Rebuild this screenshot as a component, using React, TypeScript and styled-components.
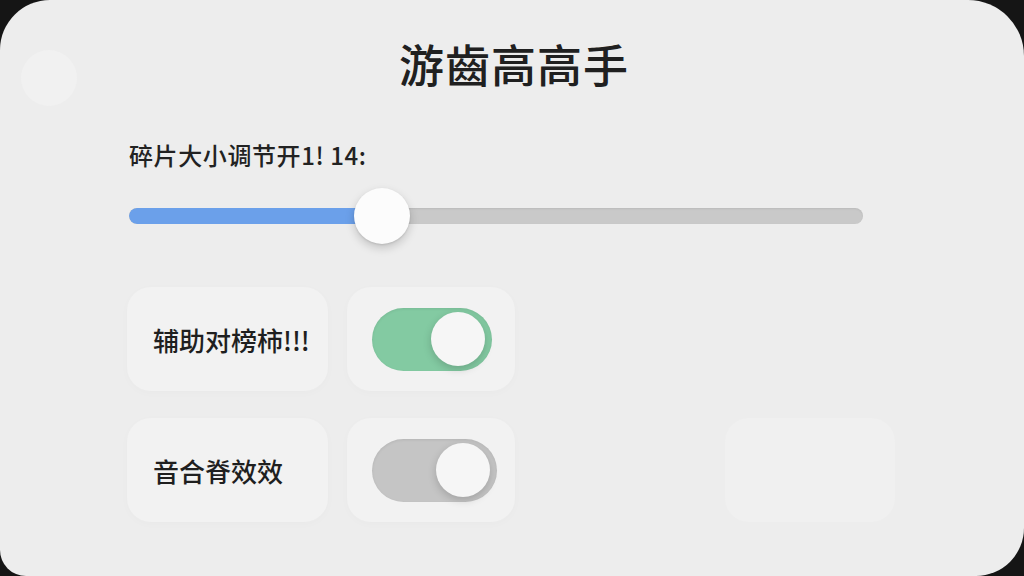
import * as React from 'react';
import styled, { createGlobalStyle } from 'styled-components';

const GlobalStyle = createGlobalStyle`
  html, body {
    margin: 0;
    padding: 0;
    background: #151515;
  }
  body {
    font-family: "Noto Sans CJK SC", "Noto Sans", sans-serif;
    color: #222;
  }
`;

const Screen = styled.div`
  width: 1024px;
  height: 576px;
  background: #151515;
  overflow: hidden;
`;

const Panel = styled.div`
  position: relative;
  width: 100%;
  height: 100%;
  box-sizing: border-box;
  background: #ededed;
  border-radius: 50px 56px 48px 26px;
  padding: 38px 129px 0 127px;
  display: flex;
  flex-direction: column;
`;

const GhostDot = styled.div`
  position: absolute;
  left: 21px;
  top: 50px;
  width: 56px;
  height: 56px;
  border-radius: 50%;
  background: #f1f1f1;
`;

const Title = styled.h1`
  margin: 0;
  text-align: center;
  font-size: 45px;
  line-height: 52px;
  font-weight: 500;
  letter-spacing: 1px;
  color: #202020;
  padding-left: 6px;
`;

const SliderLabel = styled.div`
  margin-top: 50px;
  padding-left: 2px;
  font-size: 24px;
  line-height: 30px;
  font-weight: 500;
  letter-spacing: 0.6px;
  color: #222;
`;

const SliderWrap = styled.div`
  position: relative;
  margin-top: 18px;
  margin-left: 2px;
  width: 734px;
  height: 56px;
  display: flex;
  align-items: center;
`;

const Track = styled.div`
  flex: 1;
  height: 16px;
  border-radius: 8px;
  background: #c9c9c9;
  display: flex;
  overflow: hidden;
  box-shadow: inset 0 1px 2px rgba(0, 0, 0, 0.08);
`;

const Fill = styled.div`
  height: 100%;
  background: #6ba0ea;
  border-radius: 8px 0 0 8px;
`;

const Thumb = styled.div`
  position: absolute;
  top: 0;
  width: 56px;
  height: 56px;
  margin-left: -28px;
  border-radius: 50%;
  background: #fcfcfc;
  box-shadow: 0 4px 10px rgba(0, 0, 0, 0.18), 0 1px 2px rgba(0, 0, 0, 0.1);
`;

const Rows = styled.div`
  margin-top: 43px;
  display: flex;
  flex-direction: column;
  gap: 27px;
`;

const Row = styled.div`
  display: grid;
  grid-template-columns: 201px 168px 1fr 170px;
  column-gap: 19px;
  height: 104px;
`;

const Card = styled.div<{ ghost?: boolean }>`
  border-radius: 24px;
  background: ${p => (p.ghost ? '#f0f0f0' : '#f2f2f2')};
  box-shadow: ${p => (p.ghost ? 'none' : '0 2px 10px rgba(0, 0, 0, 0.02)')};
  display: flex;
  align-items: center;
`;

const LabelCard = styled(Card)`
  padding-left: 26px;
  font-size: 26px;
  font-weight: 500;
  color: #1f1f1f;
`;

const SwitchCard = styled(Card)`
  justify-content: flex-start;
  padding-left: 25px;
`;

const Switch = styled.div<{ on?: boolean; w: number }>`
  width: ${p => p.w}px;
  height: 63px;
  box-sizing: border-box;
  border-radius: 32px;
  background: ${p => (p.on ? '#83caa2' : '#c5c5c5')};
  box-shadow: inset 0 1px 3px rgba(0, 0, 0, 0.08);
  display: flex;
  align-items: center;
  justify-content: flex-end;
  padding-right: 7px;
`;

const Knob = styled.div`
  width: 54px;
  height: 54px;
  border-radius: 50%;
  background: #f6f6f6;
  box-shadow: 0 3px 8px rgba(0, 0, 0, 0.18);
`;

const Spacer = styled.div``;

export default function App() {
  const value = 34.5;
  return (
    <Screen>
      <GlobalStyle />
      <Panel>
        <GhostDot />
        <Title>游齒高高手</Title>
        <SliderLabel>碎片大小调节开1! 14:</SliderLabel>
        <SliderWrap>
          <Track>
            <Fill style={{ width: `${value}%` }} />
          </Track>
          <Thumb style={{ left: `${value}%` }} />
        </SliderWrap>
        <Rows>
          <Row>
            <LabelCard>辅助对榜柿!!!</LabelCard>
            <SwitchCard>
              <Switch on w={120}>
                <Knob />
              </Switch>
            </SwitchCard>
            <Spacer />
            <Spacer />
          </Row>
          <Row>
            <LabelCard>音合脊效效</LabelCard>
            <SwitchCard>
              <Switch w={125}>
                <Knob />
              </Switch>
            </SwitchCard>
            <Spacer />
            <Card ghost />
          </Row>
        </Rows>
      </Panel>
    </Screen>
  );
}
